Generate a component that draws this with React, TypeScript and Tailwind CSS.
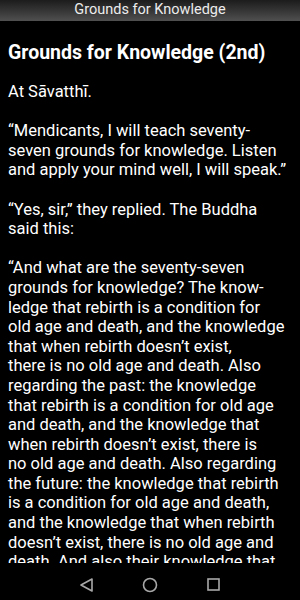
const paragraphs: string[][] = [
  ["At Sāvatthī."],
  [
    "“Mendicants, I will teach seventy-",
    "seven grounds for knowledge. Listen",
    "and apply your mind well, I will speak.”",
  ],
  ["“Yes, sir,” they replied. The Buddha", "said this:"],
  [
    "“And what are the seventy-seven",
    "grounds for knowledge? The know-",
    "ledge that rebirth is a condition for",
    "old age and death, and the knowledge",
    "that when rebirth doesn’t exist,",
    "there is no old age and death. Also",
    "regarding the past: the knowledge",
    "that rebirth is a condition for old age",
    "and death, and the knowledge that",
    "when rebirth doesn’t exist, there is",
    "no old age and death. Also regarding",
    "the future: the knowledge that rebirth",
    "is a condition for old age and death,",
    "and the knowledge that when rebirth",
    "doesn’t exist, there is no old age and",
    "death. And also their knowledge that",
  ],
];

function NavBar() {
  return (
    <div className="h-[37px] shrink-0 bg-black flex items-center justify-center">
      <svg width="300" height="37" viewBox="0 0 300 37" fill="none" stroke="#a8a8a8" strokeWidth="1.6">
        <path d="M92 16 L81 22 L92 28 Z" strokeLinejoin="round" />
        <circle cx="150" cy="22" r="6.5" />
        <rect x="208" y="16" width="11" height="11" />
      </svg>
    </div>
  );
}

export default function App() {
  return (
    <div
      className="w-[300px] h-[600px] bg-black text-white flex flex-col overflow-hidden"
      style={{ fontFamily: "Roboto, 'Liberation Sans', sans-serif" }}
    >
      <div className="h-[22px] shrink-0 bg-gradient-to-b from-[#1c1c1c] to-[#505050] border-b border-black flex items-center justify-center">
        <span className="text-[14.5px] text-[#ececec] leading-none">Grounds for Knowledge</span>
      </div>
      <div className="flex-1 overflow-hidden px-[8px]">
        <h1 className="mt-[19px] text-[19.5px] font-bold leading-[24px]">Grounds for Knowledge (2nd)</h1>
        <div className="mt-[17px] text-[16.5px] leading-[19.6px]">
          {paragraphs.map((lines, i) => (
            <p key={i} className="mb-[19.6px] whitespace-nowrap">
              {lines.map((l, j) => (
                <span key={j} className="block">
                  {l}
                </span>
              ))}
            </p>
          ))}
        </div>
      </div>
      <NavBar />
    </div>
  );
}
